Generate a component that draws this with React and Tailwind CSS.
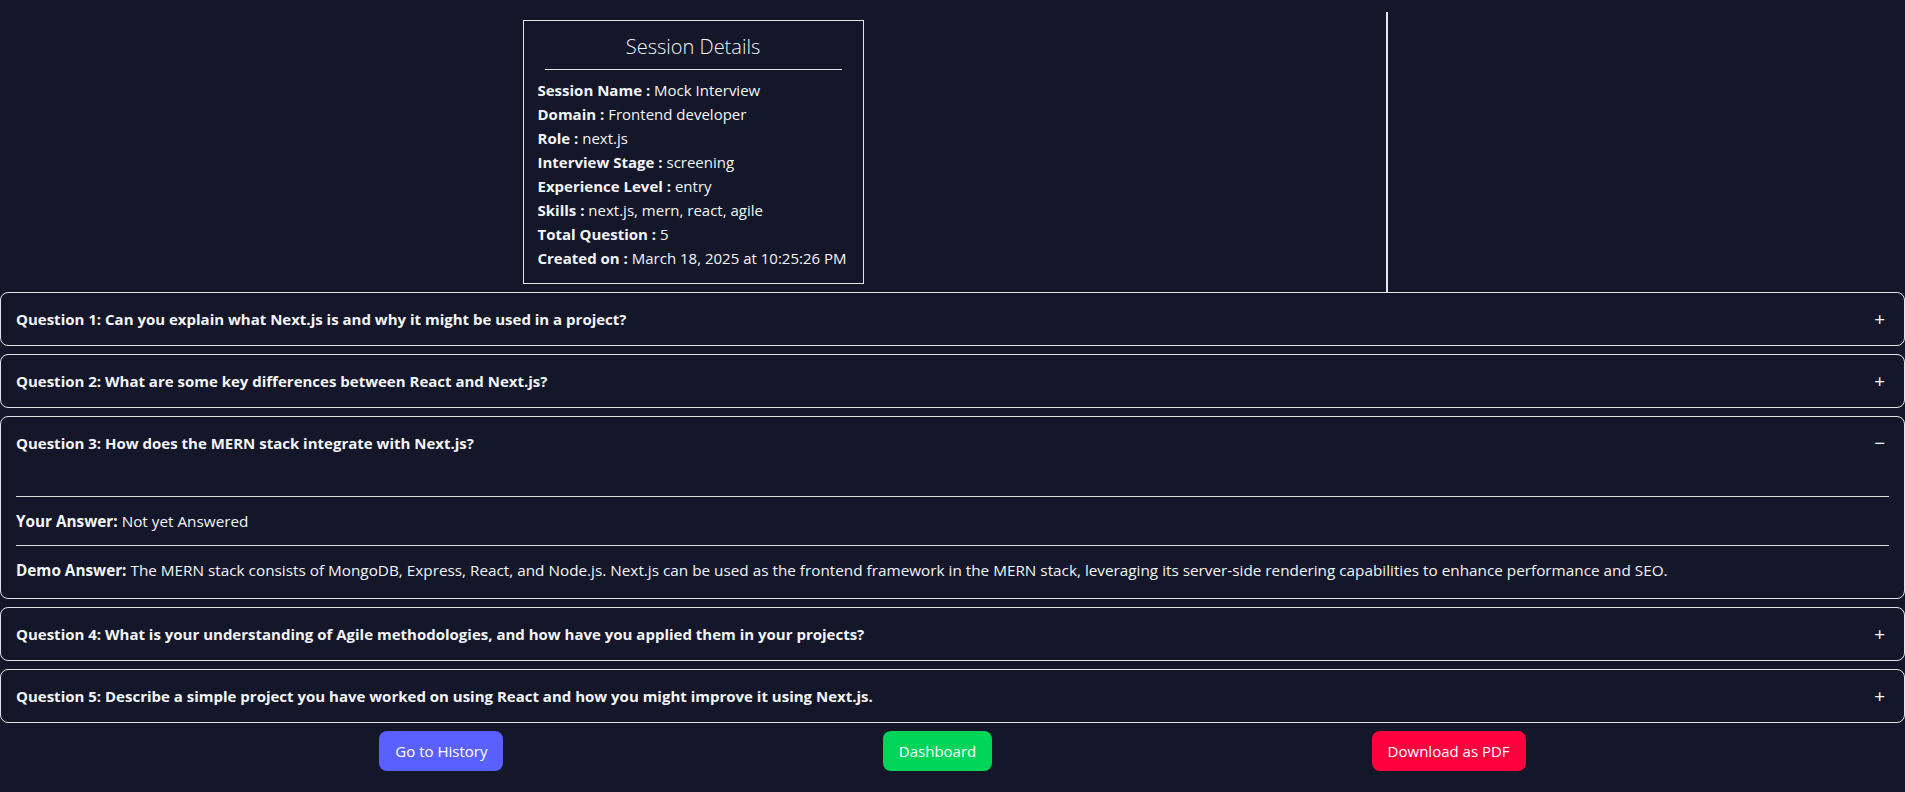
import React, { useState } from 'react';

const session = [
  ['Session Name', 'Mock Interview'],
  ['Domain', 'Frontend developer'],
  ['Role', 'next.js'],
  ['Interview Stage', 'screening'],
  ['Experience Level', 'entry'],
  ['Skills', 'next.js, mern, react, agile'],
  ['Total Question', '5'],
  ['Created on', 'March 18, 2025 at 10:25:26 PM'],
];

const questions = [
  {
    q: 'Can you explain what Next.js is and why it might be used in a project?',
    answer: 'Not yet Answered',
    demo: 'Next.js is a React framework that enables server-side rendering and static site generation, which improves performance and SEO.',
  },
  {
    q: 'What are some key differences between React and Next.js?',
    answer: 'Not yet Answered',
    demo: 'React is a library for building user interfaces, while Next.js is a framework built on top of React that adds routing, rendering strategies and more.',
  },
  {
    q: 'How does the MERN stack integrate with Next.js?',
    answer: 'Not yet Answered',
    demo: 'The MERN stack consists of MongoDB, Express, React, and Node.js. Next.js can be used as the frontend framework in the MERN stack, leveraging its server-side rendering capabilities to enhance performance and SEO.',
  },
  {
    q: 'What is your understanding of Agile methodologies, and how have you applied them in your projects?',
    answer: 'Not yet Answered',
    demo: 'Agile is an iterative approach to software development that focuses on collaboration, feedback and small, frequent releases.',
  },
  {
    q: 'Describe a simple project you have worked on using React and how you might improve it using Next.js.',
    answer: 'Not yet Answered',
    demo: 'A todo app built with React could be improved with Next.js by adding server-side rendering, API routes and file based routing.',
  },
];

const QuestionItem = ({ index, item, open, onToggle }) => {
  return (
    <div className="border border-[#e2e4ea] rounded-lg">
      <button
        onClick={onToggle}
        className="w-full flex items-center justify-between pl-[15px] pr-[19px] py-4 text-left"
      >
        <span className="font-bold text-[15px] leading-5">
          Question {index + 1}: {item.q}
        </span>
        <span className="text-[19px] leading-5">{open ? '−' : '+'}</span>
      </button>
      {open && (
        <div className="px-[15px] pb-1">
          <hr className="mt-[27px] border-[#d8dae0]" />
          <p className="py-3 text-[15.3px] leading-6">
            <span className="font-bold">Your Answer:</span> {item.answer}
          </p>
          <hr className="border-[#d8dae0]" />
          <p className="py-3 text-[15.3px] leading-6">
            <span className="font-bold">Demo Answer:</span> {item.demo}
          </p>
        </div>
      )}
    </div>
  );
};

export default function App() {
  const [openIndex, setOpenIndex] = useState(2);

  return (
    <div className="min-h-screen bg-[#131729] text-[#f4f5f8] font-['Open_Sans',sans-serif]">
      <div className="flex pt-3">
        <div className="w-[1386px] flex justify-center py-2">
          <div className="w-[341px] border border-[#e2e4ea] px-[14px] pt-3 pb-[13px]">
            <h2 className="text-center text-[20px] font-light leading-7">Session Details</h2>
            <hr className="mx-[7px] mt-2 mb-2 border-[#e2e4ea]" />
            {session.map(([label, value]) => (
              <p key={label} className="text-[15px] leading-6 whitespace-nowrap">
                <span className="font-bold">{label} :</span> {value}
              </p>
            ))}
          </div>
        </div>
        <div className="flex-1 border-l-2 border-[#e8e9ee]"></div>
      </div>

      <div className="flex flex-col gap-2">
        {questions.map((item, i) => (
          <QuestionItem
            key={i}
            index={i}
            item={item}
            open={openIndex === i}
            onToggle={() => setOpenIndex(openIndex === i ? null : i)}
          />
        ))}
      </div>

      <div className="flex justify-evenly mt-2 pb-6">
        <button className="h-10 px-4 rounded-lg bg-[#5a60fd] text-white text-[15px]">Go to History</button>
        <button className="h-10 px-4 rounded-lg bg-[#00d559] text-white text-[15px]">Dashboard</button>
        <button className="h-10 px-4 rounded-lg bg-[#ff003e] text-white text-[15px]">Download as PDF</button>
      </div>
    </div>
  );
}
